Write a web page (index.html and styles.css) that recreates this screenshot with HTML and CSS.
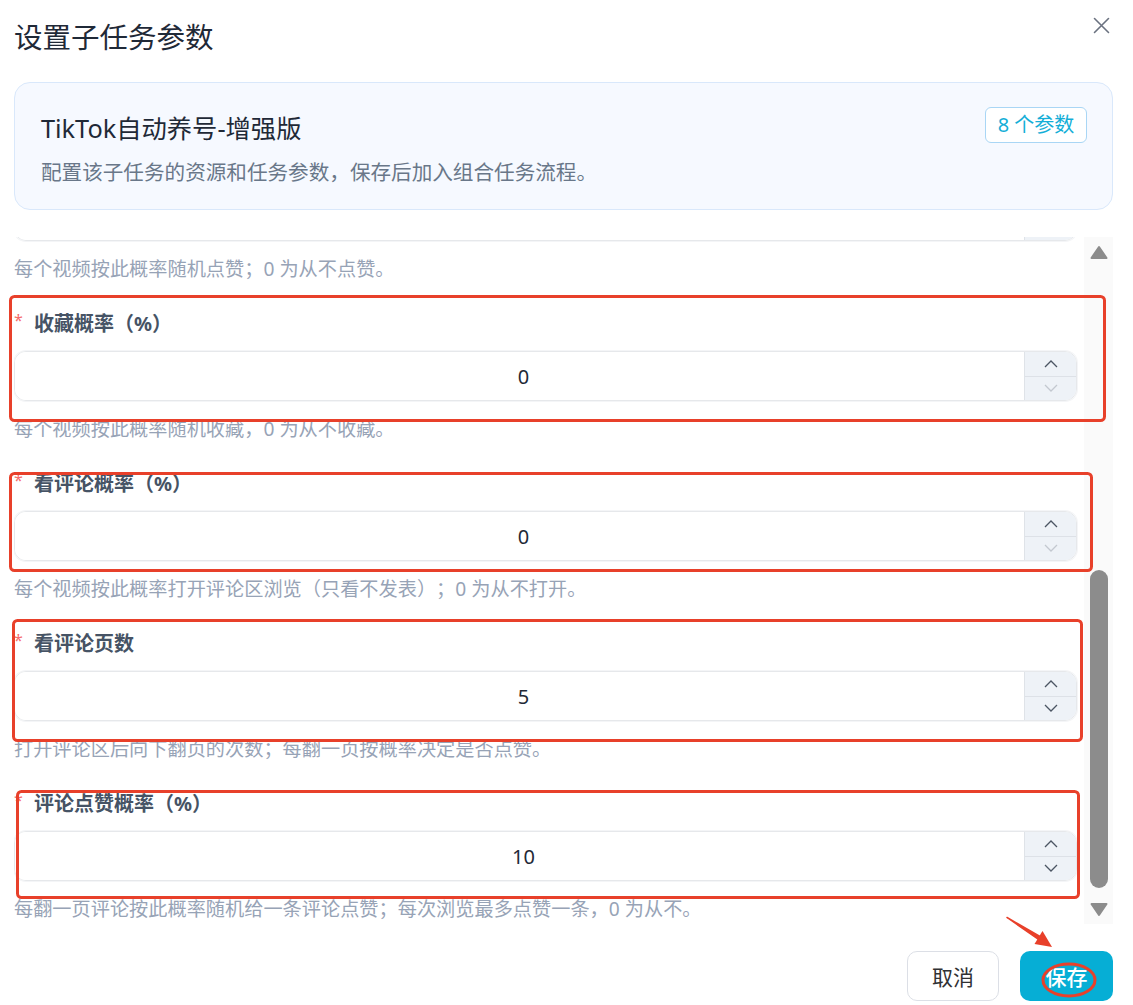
FILE: index.html
```html
<!DOCTYPE html>
<html lang="zh-CN">
<head>
  <meta charset="UTF-8" />
  <meta name="viewport" content="width=device-width, initial-scale=1.0" />
  <title>设置子任务参数</title>
  <link rel="stylesheet" href="styles.css">
</head>
<body>
  <div class="dialog">
    <div class="dialog-header">
      <h2 class="dialog-title">设置子任务参数</h2>
      <button class="dialog-close" aria-label="关闭">
        <svg width="17" height="17" viewBox="0 0 17 17"><path d="M1.5 1.5L15.5 15.5M15.5 1.5L1.5 15.5" stroke="#6b7280" stroke-width="1.6" fill="none" stroke-linecap="round"/></svg>
      </button>
    </div>

    <div class="task-card">
      <div class="task-card-top">
        <div class="task-name">TikTok自动养号-增强版</div>
        <span class="param-badge">8 个参数</span>
      </div>
      <p class="task-desc">配置该子任务的资源和任务参数，保存后加入组合任务流程。</p>
    </div>

    <div class="form-wrap">
      <div class="form-body" id="formBody">
        <div class="field">
          <label class="field-label"><span class="req">*</span>刷视频数量</label>
          <div class="num-input">
            <input type="text" value="20">
            <div class="spinner">
              <button><svg width="14" height="8" viewBox="0 0 14 8"><path d="M1 7L7 1L13 7"/></svg></button>
              <button><svg width="14" height="8" viewBox="0 0 14 8"><path d="M1 1L7 7L13 1"/></svg></button>
            </div>
          </div>
          <div class="field-hint">本次任务共刷多少个视频。</div>
        </div>

        <div class="field">
          <label class="field-label"><span class="req">*</span>单个视频观看时长（秒）</label>
          <div class="num-input">
            <input type="text" value="15">
            <div class="spinner">
              <button><svg width="14" height="8" viewBox="0 0 14 8"><path d="M1 7L7 1L13 7"/></svg></button>
              <button><svg width="14" height="8" viewBox="0 0 14 8"><path d="M1 1L7 7L13 1"/></svg></button>
            </div>
          </div>
          <div class="field-hint">每个视频停留的时间，实际会在此基础上随机浮动。</div>
        </div>

        <div class="field">
          <label class="field-label"><span class="req">*</span>点赞概率（%）</label>
          <div class="num-input">
            <input type="text" value="0">
            <div class="spinner">
              <button><svg width="14" height="8" viewBox="0 0 14 8"><path d="M1 7L7 1L13 7"/></svg></button>
              <button class="is-disabled"><svg width="14" height="8" viewBox="0 0 14 8"><path d="M1 1L7 7L13 1"/></svg></button>
            </div>
          </div>
          <div class="field-hint">每个视频按此概率随机点赞；0 为从不点赞。</div>
        </div>

        <div class="field">
          <label class="field-label"><span class="req">*</span>收藏概率（%）</label>
          <div class="num-input">
            <input type="text" value="0">
            <div class="spinner">
              <button><svg width="14" height="8" viewBox="0 0 14 8"><path d="M1 7L7 1L13 7"/></svg></button>
              <button class="is-disabled"><svg width="14" height="8" viewBox="0 0 14 8"><path d="M1 1L7 7L13 1"/></svg></button>
            </div>
          </div>
          <div class="field-hint">每个视频按此概率随机收藏，0 为从不收藏。</div>
        </div>

        <div class="field">
          <label class="field-label"><span class="req">*</span>看评论概率（%）</label>
          <div class="num-input">
            <input type="text" value="0">
            <div class="spinner">
              <button><svg width="14" height="8" viewBox="0 0 14 8"><path d="M1 7L7 1L13 7"/></svg></button>
              <button class="is-disabled"><svg width="14" height="8" viewBox="0 0 14 8"><path d="M1 1L7 7L13 1"/></svg></button>
            </div>
          </div>
          <div class="field-hint">每个视频按此概率打开评论区浏览（只看不发表）；0 为从不打开。</div>
        </div>

        <div class="field">
          <label class="field-label"><span class="req">*</span>看评论页数</label>
          <div class="num-input">
            <input type="text" value="5">
            <div class="spinner">
              <button><svg width="14" height="8" viewBox="0 0 14 8"><path d="M1 7L7 1L13 7"/></svg></button>
              <button><svg width="14" height="8" viewBox="0 0 14 8"><path d="M1 1L7 7L13 1"/></svg></button>
            </div>
          </div>
          <div class="field-hint">打开评论区后向下翻页的次数；每翻一页按概率决定是否点赞。</div>
        </div>

        <div class="field">
          <label class="field-label"><span class="req">*</span>评论点赞概率（%）</label>
          <div class="num-input">
            <input type="text" value="10">
            <div class="spinner">
              <button><svg width="14" height="8" viewBox="0 0 14 8"><path d="M1 7L7 1L13 7"/></svg></button>
              <button><svg width="14" height="8" viewBox="0 0 14 8"><path d="M1 1L7 7L13 1"/></svg></button>
            </div>
          </div>
          <div class="field-hint">每翻一页评论按此概率随机给一条评论点赞；每次浏览最多点赞一条，0 为从不。</div>
        </div>
      </div>

      <div class="fake-scrollbar">
        <div class="sb-btn"><svg width="18" height="15" viewBox="0 0 18 15"><path d="M9 2L16.5 13H1.5Z" fill="#8c8c8c" stroke="#8c8c8c" stroke-width="2" stroke-linejoin="round"/></svg></div>
        <div class="sb-track"><div class="sb-thumb"></div></div>
        <div class="sb-btn"><svg width="18" height="15" viewBox="0 0 18 15"><path d="M1.5 2H16.5L9 13Z" fill="#8c8c8c" stroke="#8c8c8c" stroke-width="2" stroke-linejoin="round"/></svg></div>
      </div>
    </div>

    <div class="dialog-footer">
      <button class="btn btn-cancel">取消</button>
      <button class="btn btn-save">保存</button>
    </div>
  </div>

  <!-- 截图上的红色标注 -->
  <svg class="annotations" width="1133" height="1005" viewBox="0 0 1133 1005">
    <g fill="none" stroke="#e8402a" stroke-width="3">
      <rect x="10.5" y="296.5" width="1094" height="124" rx="4"/>
      <rect x="10.5" y="473.5" width="1081" height="97" rx="4"/>
      <rect x="13.5" y="620.5" width="1068" height="120" rx="4"/>
      <rect x="17.5" y="791.5" width="1061" height="106" rx="4"/>
      <ellipse cx="1069" cy="980" rx="26" ry="16"/>
    </g>
    <path d="M1007 917.5L1040 936.5L1038.5 939.5Z" fill="#e8402a" stroke="#e8402a" stroke-width="1.5" stroke-linejoin="round"/>
    <path d="M1052 947L1034.5 944L1042.5 931Z" fill="#e8402a"/>
  </svg>

  <script>
    // 弹窗打开时已滚动到底部
    var formBody = document.getElementById("formBody");
    formBody.scrollTop = formBody.scrollHeight;
  </script>
</body>
</html>
```

FILE: styles.css
```css
body {
  margin: 0;
  background-color: #fff;
  color: #1f2937;
  font-family: "Noto Sans", "Noto Sans CJK SC", sans-serif;
  text-spacing-trim: space-all;
}

button {
  font-family: inherit;
}

.dialog {
  padding: 17px 20px 0 14px;
}

.dialog-header {
  display: flex;
  justify-content: space-between;
  align-items: flex-start;
}

.dialog-title {
  margin: 0;
  font-size: 28.5px;
  line-height: 40px;
  font-weight: 400;
  color: #1f2937;
}

.dialog-close {
  border: none;
  background: none;
  padding: 0;
  margin-right: 3px;
  width: 17px;
  height: 17px;
  cursor: pointer;
}

.dialog-close svg {
  display: block;
}

.task-card {
  margin-top: 25px;
  padding: 24px 25px 22px 26px;
  background-color: #f6f9ff;
  border: 1px solid #d9e8fb;
  border-radius: 16px;
}

.task-card-top {
  display: flex;
  justify-content: space-between;
  align-items: flex-start;
}

.task-name {
  margin-top: 3px;
  font-size: 25.3px;
  line-height: 36px;
  color: #1f2937;
}

.param-badge {
  box-sizing: border-box;
  width: 102px;
  height: 36px;
  line-height: 34px;
  text-align: center;
  font-size: 20px;
  color: #14aed7;
  background-color: #fff;
  border: 1px solid #a9d6f5;
  border-radius: 6px;
}

.task-desc {
  margin: 11px 0 0;
  font-size: 20.6px;
  line-height: 30px;
  color: #697789;
}

.form-wrap {
  margin-top: 27px;
  height: 687px;
  display: flex;
}

.form-body {
  flex: 1;
  overflow: hidden;
  padding-right: 7px;
  padding-bottom: 1px;
  display: flex;
  flex-direction: column;
  gap: 27px;
}

.field {
  flex-shrink: 0;
}

.field-label {
  display: block;
  font-size: 20px;
  line-height: 28px;
  font-weight: 700;
  color: #465365;
}

.req {
  display: inline-block;
  width: 20px;
  vertical-align: top;
  font-size: 16px;
  line-height: 20px;
  font-weight: 400;
  color: #f56c6c;
}

.num-input {
  margin-top: 13px;
  box-sizing: border-box;
  height: 50px;
  display: flex;
  border: 1px solid #e6e8eb;
  border-radius: 12px;
  overflow: hidden;
  box-shadow: 0 0 0 1px #f4f5f7;
}

.num-input input {
  flex: 1;
  min-width: 0;
  border: none;
  outline: none;
  padding: 0 0 0 8px;
  text-align: center;
  font-family: inherit;
  font-size: 20px;
  color: #1f2937;
  background: #fff;
}

.spinner {
  width: 51px;
  display: flex;
  flex-direction: column;
  border-left: 1px solid #dfe3e8;
  background-color: #eef2f7;
}

.spinner button {
  flex: 1;
  border: none;
  background: none;
  padding: 0;
  display: flex;
  align-items: center;
  justify-content: center;
  cursor: pointer;
}

.spinner button:first-child {
  border-bottom: 1px solid #dde1e7;
}

.spinner svg path {
  fill: none;
  stroke: #4b5563;
  stroke-width: 1.3;
}

.spinner button.is-disabled svg path {
  stroke: #c3c8d0;
}

.field-hint {
  margin-top: 14px;
  font-size: 19.2px;
  line-height: 28px;
  color: #97a3b6;
  white-space: nowrap;
}

.fake-scrollbar {
  width: 29px;
  display: flex;
  flex-direction: column;
  background-color: #fafafa;
}

.sb-btn {
  height: 30px;
  display: flex;
  align-items: center;
  justify-content: center;
}

.sb-btn svg {
  display: block;
}

.sb-track {
  flex: 1;
  display: flex;
  flex-direction: column;
}

.sb-thumb {
  margin: auto 5px 6px 6px;
  height: 318px;
  background-color: #8c8c8c;
  border-radius: 9px;
}

.dialog-footer {
  padding-top: 27px;
  display: flex;
  justify-content: flex-end;
  gap: 21px;
}

.btn {
  height: 50px;
  font-size: 21px;
  border-radius: 10px;
  cursor: pointer;
}

.btn-cancel {
  width: 92px;
  background-color: #fff;
  color: #303133;
  border: 1px solid #dcdfe6;
}

.btn-save {
  width: 93px;
  background-color: #06aed5;
  color: #fff;
  border: none;
  font-weight: 500;
}

.annotations {
  position: absolute;
  top: 0;
  left: 0;
  pointer-events: none;
}
```
